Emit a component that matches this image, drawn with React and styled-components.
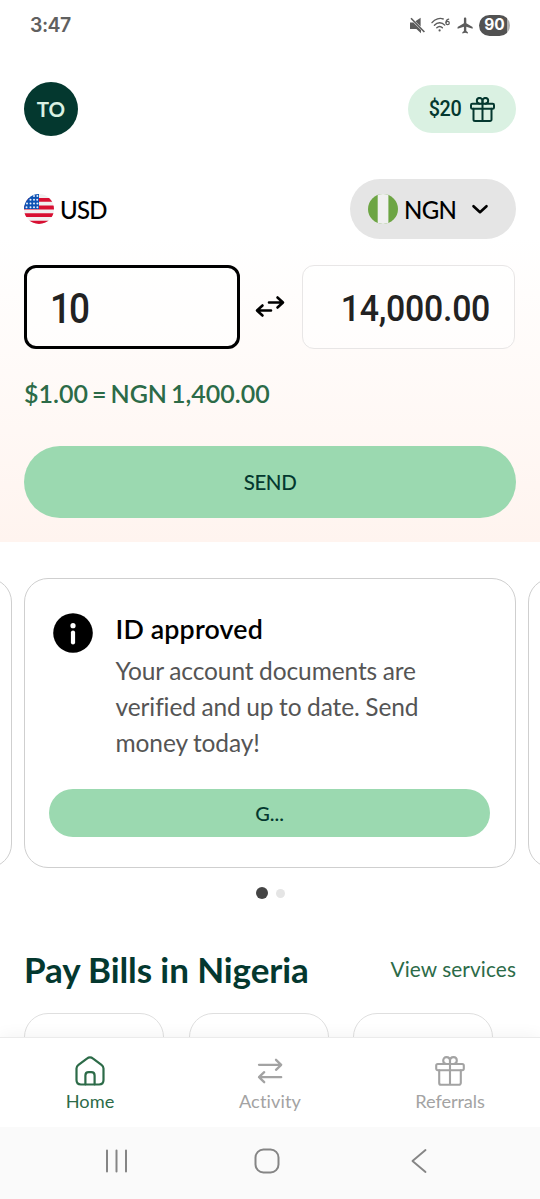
import React from "react";
import styled, { createGlobalStyle } from "styled-components";
import { MdFlight } from "react-icons/md";

const GlobalStyle = createGlobalStyle`
  *, *::before, *::after { box-sizing: border-box; }
  body { margin: 0; background: #fff; font-family: Lato, "Open Sans", sans-serif; overflow: hidden; }
  button, input { font: inherit; border: 0; background: none; padding: 0; margin: 0; color: inherit; }
  svg { display: block; flex: none; }
`;

const Screen = styled.div`
  width: 540px;
  height: 1199px;
  display: flex;
  flex-direction: column;
  overflow: hidden;
  background: #fff;
`;

const Label = styled.span`
  font-family: ${(p) => p.$font || "Lato"}, sans-serif;
  font-size: ${(p) => p.$size}px;
  font-weight: ${(p) => p.$weight || 400};
  letter-spacing: ${(p) => p.$track || 0}px;
  word-spacing: ${(p) => p.$words || 0}px;
  line-height: ${(p) => p.$line || p.$size * 1.2}px;
  color: ${(p) => p.$color || "#000"};
  white-space: nowrap;
`;

const Figure = styled(Label)`
  display: block;
  transform: scaleX(${(p) => p.$condense});
  transform-origin: ${(p) => p.$from || "left"} center;
`;

const Content = styled.main`
  height: 1037px;
  overflow: hidden;
  flex: none;
`;

const StatusBar = styled.header`
  height: 50px;
  padding: 1px 30px 0;
  display: flex;
  align-items: center;
  justify-content: space-between;
`;

const StatusIcons = styled.div`
  display: flex;
  align-items: center;
  margin-top: -1px;
`;

const IconGroup = styled.div`
  display: flex;
  align-items: center;
  gap: 5px;
`;

const Battery = styled.div`
  width: 31px;
  height: 21px;
  margin-left: 4px;
  border-radius: 11px;
  display: flex;
  align-items: center;
  justify-content: center;
  background: linear-gradient(90deg, #525252 90%, #b0b0b0 90%);
`;

const Hero = styled.section`
  height: 492px;
  padding: 32px 24px 24px;
  background: linear-gradient(180deg, #fff 38%, #fff4ef 100%);
`;

const TopRow = styled.div`
  height: 54px;
  display: flex;
  align-items: center;
  justify-content: space-between;
`;

const Avatar = styled.div`
  width: 54px;
  height: 54px;
  padding-top: 1px;
  border-radius: 50%;
  background: #04382f;
  display: flex;
  align-items: center;
  justify-content: center;
`;

const RewardPill = styled.button`
  width: 108px;
  height: 48px;
  padding: 1px 21px 0 0;
  border-radius: 24px;
  background: #daf1e2;
  display: flex;
  align-items: center;
  justify-content: flex-end;
  gap: 9px;
`;

const CurrencyRow = styled.div`
  height: 60px;
  margin-top: 43px;
  display: flex;
  align-items: center;
  justify-content: space-between;
`;

const Currency = styled.div`
  display: flex;
  align-items: center;
  gap: 6px;

  ${Label} {
    padding-top: 3px;
  }
`;

const CurrencyPicker = styled.button`
  width: 166px;
  height: 60px;
  padding-left: 18px;
  border-radius: 30px;
  background: #e5e5e5;
  display: flex;
  align-items: center;
  gap: 15px;
`;

const AmountRow = styled.div`
  height: 84px;
  margin-top: 26px;
  display: flex;
  align-items: center;
`;

const AmountBox = styled.div`
  width: ${(p) => (p.$active ? 216 : 213)}px;
  height: 84px;
  padding: ${(p) => (p.$active ? "4px 23px 0" : "4px 24px 0")};
  border: ${(p) => (p.$active ? "3px solid #000" : "1.5px solid #e8e6e6")};
  border-radius: 12px;
  background: rgba(255, 255, 255, 0.55);
  display: flex;
  align-items: center;
  justify-content: ${(p) => (p.$active ? "flex-start" : "flex-end")};
`;

const SwapSlot = styled.div`
  width: 62px;
  padding: 0 2px 2px 0;
  display: flex;
  justify-content: center;
`;

const RateLine = styled.div`
  height: 36px;
  margin-top: 26px;
  display: flex;
  align-items: center;
`;

const SendButton = styled.button`
  width: 100%;
  height: 72px;
  margin-top: 35px;
  padding-top: 1px;
  border-radius: 36px;
  background: #9bd9b0;
  display: flex;
  align-items: center;
  justify-content: center;
`;

const Carousel = styled.section`
  height: 290px;
  margin-top: 36px;
  display: flex;
  justify-content: center;
  gap: 12px;
`;

const Card = styled.article`
  flex: none;
  width: 492px;
  height: 290px;
  padding: 30px 24px 0;
  border: 1.5px solid #cfcfcf;
  border-radius: 24px;
  background: #fff;
`;

const CardBody = styled.div`
  display: flex;
  gap: 22.5px;
  padding-left: 4px;
`;

const CardIcon = styled.div`
  padding-top: 4px;
`;

const CardText = styled.div`
  display: flex;
  flex-direction: column;
  height: 180px;
`;

const CardMessage = styled.div`
  display: flex;
  flex-direction: column;
  padding-top: 4px;
`;

const CardButton = styled.button`
  width: 441px;
  height: 48px;
  border-radius: 24px;
  background: #9bd9b0;
  display: flex;
  align-items: center;
  justify-content: center;
`;

const Pager = styled.div`
  height: 12px;
  margin-top: 19px;
  display: flex;
  justify-content: center;
  align-items: center;
  gap: 8px;
`;

const Dot = styled.i`
  width: ${(p) => (p.$active ? 12 : 9)}px;
  height: ${(p) => (p.$active ? 12 : 9)}px;
  border-radius: 50%;
  background: ${(p) => (p.$active ? "#444" : "#e5e5e5")};
`;

const SectionHead = styled.div`
  height: 48px;
  margin-top: 46px;
  padding: 0 24px;
  display: flex;
  align-items: center;
  justify-content: space-between;
`;

const Tiles = styled.div`
  display: flex;
  gap: 24.5px;
  padding: 0 24px;
  margin-top: 20px;
`;

const Tile = styled.div`
  width: 140px;
  height: 120px;
  flex: none;
  border: 1px solid #dfdfdf;
  border-radius: 24px;
`;

const TabBar = styled.nav`
  position: relative;
  height: 90px;
  flex: none;
  display: grid;
  grid-template-columns: repeat(3, 1fr);
  background: #fff;
  border-top: 1px solid #ebebeb;
  box-shadow: 0 -3px 14px rgba(0, 0, 0, 0.045);
`;

const Tab = styled.button`
  display: flex;
  flex-direction: column;
  align-items: center;
  padding-top: 18px;
  gap: 2px;
`;

const SystemBar = styled.footer`
  position: relative;
  height: 72px;
  flex: none;
  padding: 0 112px 4px 105px;
  display: flex;
  align-items: center;
  background: #fafafa;
`;

const SystemKey = styled.button`
  margin-left: ${(p) => p.$before || 0}px;
`;

const Stroke = ({ w, h, box, color = "#000", width = 2, children }) => (
  <svg width={w} height={h} viewBox={box || `0 0 ${w} ${h}`} fill="none" stroke={color} strokeWidth={width} strokeLinecap="round" strokeLinejoin="round">
    {children}
  </svg>
);

const Gift = ({ size, color, width }) => (
  <Stroke w={size} h={size} box="0 0 30 30" color={color} width={width}>
    <rect x="1.2" y="8" width="27.6" height="6.2" rx="1.6" />
    <path d="M4.2 14.2V27a1.8 1.8 0 0 0 1.8 1.8h18a1.8 1.8 0 0 0 1.8-1.8V14.2M15 5V28.8" />
    <path d="M15 8V5c0-2.3-1.4-3.9-3.5-3.9S8.2 2.6 8.2 4.6 9.6 8 11.6 8M15 8V5c0-2.3 1.4-3.9 3.5-3.9s3.3 1.5 3.3 3.5S20.4 8 18.4 8" />
  </Stroke>
);

const MuteIcon = () => (
  <svg width="17" height="17" viewBox="0 0 17 17">
    <path d="M1 5.4h3.4L12 13v3.2L7.4 12H1z" fill="#5c5c5c" />
    <path d="M6.4 4.2 11.6.8v8.6z" fill="#5c5c5c" />
    <path d="M2 1.3 15.4 15" stroke="#5c5c5c" strokeWidth="1.6" />
  </svg>
);

const WifiIcon = () => (
  <svg width="20" height="16" viewBox="0 0 20 16" fill="none" stroke="#5c5c5c" strokeWidth="1.4" strokeLinecap="round">
    <path d="M1 5.6C4.2 1.7 9 .6 12.2 2M3.4 8.3c3-3.3 7.5-3.3 10.3-.2M5.8 10.8c1.8-1.8 4-1.8 5.6 0" />
    <circle cx="8.6" cy="13.4" r="1.1" fill="#5c5c5c" stroke="none" />
    <path d="M17.7 2.2c-1.8.3-2.7 1.7-2.7 3.5" strokeWidth="1.2" />
    <circle cx="16.6" cy="6" r="1.7" strokeWidth="1.2" />
  </svg>
);

const UsFlag = () => (
  <svg width="30" height="30" viewBox="0 0 30 30">
    <clipPath id="us-round"><circle cx="15" cy="15" r="15" /></clipPath>
    <g clipPath="url(#us-round)">
      <path fill="#f0f0f0" d="M0 0h30v30H0z" />
      {[3.9, 11.6, 19.2, 26.7].map((y) => (
        <path key={y} fill="#d80f32" d={`M0 ${y}h30v3.8H0z`} />
      ))}
      <path fill="#0d52b4" d="M0 0h15v15H0z" />
      {[[10, 2], [13.4, 2], [6.5, 5.8], [10, 5.8], [13.2, 5.8], [3, 9.6], [6.5, 9.6], [10, 9.6], [13.4, 9.6], [2.5, 13.2], [6.5, 13.2], [10, 13.2], [13.4, 13.2]].map(([x, y]) => (
        <circle key={`${x}-${y}`} cx={x} cy={y} r="1" fill="#e9f0fa" />
      ))}
    </g>
  </svg>
);

const NigeriaFlag = () => (
  <svg width="30" height="30" viewBox="0 0 30 30">
    <clipPath id="ng-round"><circle cx="15" cy="15" r="15" /></clipPath>
    <g clipPath="url(#ng-round)">
      <path fill="#6da544" d="M0 0h30v30H0z" />
      <path fill="#f0f0f0" d="M9.7 0h10.7v30H9.7z" />
    </g>
  </svg>
);

const InfoIcon = () => (
  <svg width="40" height="40" viewBox="0 0 40 40">
    <circle cx="20" cy="20" r="19.8" />
    <circle cx="20" cy="12.7" r="2.6" fill="#fff" />
    <path d="M20 19.5v10" stroke="#fff" strokeWidth="4.2" strokeLinecap="round" />
  </svg>
);

const HomeIcon = ({ color }) => (
  <Stroke w={30} h={30} color={color} width={2.2}>
    <path d="M1.5 12.6c0-1.6.7-2.7 2-3.7l8.4-6.2c1.9-1.5 4.3-1.5 6.2 0l8.4 6.2c1.3 1 2 2.1 2 3.7v11.5c0 2.8-1.6 4.4-4.4 4.4H5.9c-2.8 0-4.4-1.6-4.4-4.4z" />
    <path d="M10.4 28.3v-8.9c0-2.2 1.1-3.3 3.3-3.3h2.6c2.2 0 3.3 1.1 3.3 3.3v8.9" />
  </Stroke>
);

const ActivityIcon = ({ color }) => (
  <Stroke w={30} h={30} color={color} width={2.3}>
    <path d="M4 8.8h22M21 3.8l5.2 5-5.2 5M26.2 21.2H4M9.2 16.2l-5.2 5 5.2 5" />
  </Stroke>
);

const tabs = [
  { label: "Home", track: 0, icon: (c) => <HomeIcon color={c} />, active: true },
  { label: "Activity", track: 0.1, icon: (c) => <ActivityIcon color={c} /> },
  { label: "Referrals", track: -0.1, icon: (c) => <Gift size={30} color={c} width={2.1} /> },
];

const message = ["Your account documents are", "verified and up to date. Send", "money today!"];

export default function App() {
  return (
    <Screen>
      <GlobalStyle />
      <Content>
        <StatusBar>
          <Label $font="Inter" $size={19.5} $weight={600} $track={-0.5} $color="#606060">3:47</Label>
          <StatusIcons>
            <IconGroup>
              <MuteIcon />
              <WifiIcon />
              <MdFlight size={19} color="#5c5c5c" />
            </IconGroup>
            <Battery>
              <Label $font="Inter" $size={15.5} $weight={700} $color="#fff">90</Label>
            </Battery>
          </StatusIcons>
        </StatusBar>

        <Hero>
          <TopRow>
            <Avatar><Label $size={20.5} $weight={700} $color="#daf1e2">TO</Label></Avatar>
            <RewardPill>
              <Figure $font="Roboto" $size={22} $weight={500} $track={-0.4} $condense={0.9} $from="right" $color="#04382f">$20</Figure>
              <Gift size={25} color="#04382f" width={2.4} />
            </RewardPill>
          </TopRow>

          <CurrencyRow>
            <Currency>
              <UsFlag />
              <Label $size={24} $weight={500} $track={-0.7}>USD</Label>
            </Currency>
            <CurrencyPicker>
              <Currency>
                <NigeriaFlag />
                <Label $size={24} $weight={500} $track={-0.7}>NGN</Label>
              </Currency>
              <Stroke w={18} h={12} width={2.6}><path d="M2.5 3.2 9 9.2 15.5 3.2" /></Stroke>
            </CurrencyPicker>
          </CurrencyRow>

          <AmountRow>
            <AmountBox $active><Figure $font="Roboto" $size={42} $weight={500} $track={-2.2} $condense={0.88} $color="#222">10</Figure></AmountBox>
            <SwapSlot>
              <Stroke w={30} h={24} width={2.6}>
                <path d="M14 8.5h13.5M22.5 3.5l5.5 5-5.5 5M16 16.5H2.5M7.5 11.5 2 16.5l5.5 5" />
              </Stroke>
            </SwapSlot>
            <AmountBox><Figure $font="Roboto" $size={37} $weight={500} $track={-0.3} $condense={0.915} $from="right" $color="#222">14,000.00</Figure></AmountBox>
          </AmountRow>

          <RateLine><Label $size={25} $weight={600} $track={0} $words={-2.2} $color="#2c6b48">$1.00 = NGN 1,400.00</Label></RateLine>
          <SendButton><Label $size={20.5} $weight={500} $track={-0.4} $color="#04382f">SEND</Label></SendButton>
        </Hero>

        <Carousel>
          <Card />
          <Card>
            <CardBody>
              <CardIcon><InfoIcon /></CardIcon>
              <CardText>
                <Label $size={26.8} $weight={600} $track={0.15} $line={40}>ID approved</Label>
                <CardMessage>
                  {message.map((line) => (
                    <Label key={line} $size={24.5} $line={36} $track={-0.1} $words={-0.6} $color="#555">{line}</Label>
                  ))}
                </CardMessage>
              </CardText>
            </CardBody>
            <CardButton><Label $size={20} $weight={500} $color="#04382f">G...</Label></CardButton>
          </Card>
          <Card />
        </Carousel>
        <Pager><Dot $active /><Dot /></Pager>

        <SectionHead>
          <Label $size={35} $weight={700} $track={-0.1} $color="#04382f">Pay Bills in Nigeria</Label>
          <Label $size={20.8} $track={0.1} $color="#2c6b48">View services</Label>
        </SectionHead>
        <Tiles><Tile /><Tile /><Tile /></Tiles>
      </Content>

      <TabBar>
        {tabs.map((t) => {
          const color = t.active ? "#2c6b48" : "#a3a3a3";
          return (
            <Tab key={t.label}>
              {t.icon(color)}
              <Label $size={18.2} $line={26} $track={t.track} $color={color}>{t.label}</Label>
            </Tab>
          );
        })}
      </TabBar>

      <SystemBar>
        <SystemKey><Stroke w={23} h={24} color="#858585" width={2}><path d="M2 1.5v21M11.5 1.5v21M21 1.5v21" /></Stroke></SystemKey>
        <SystemKey $before={126}><Stroke w={26} h={26} color="#858585" width={2}><rect x="1.5" y="1.5" width="23" height="23" rx="8" /></Stroke></SystemKey>
        <SystemKey $before={130}><Stroke w={17} h={26} color="#858585" width={1.9}><path d="M15.5 2 2.5 13l13 11" /></Stroke></SystemKey>
      </SystemBar>
    </Screen>
  );
}
